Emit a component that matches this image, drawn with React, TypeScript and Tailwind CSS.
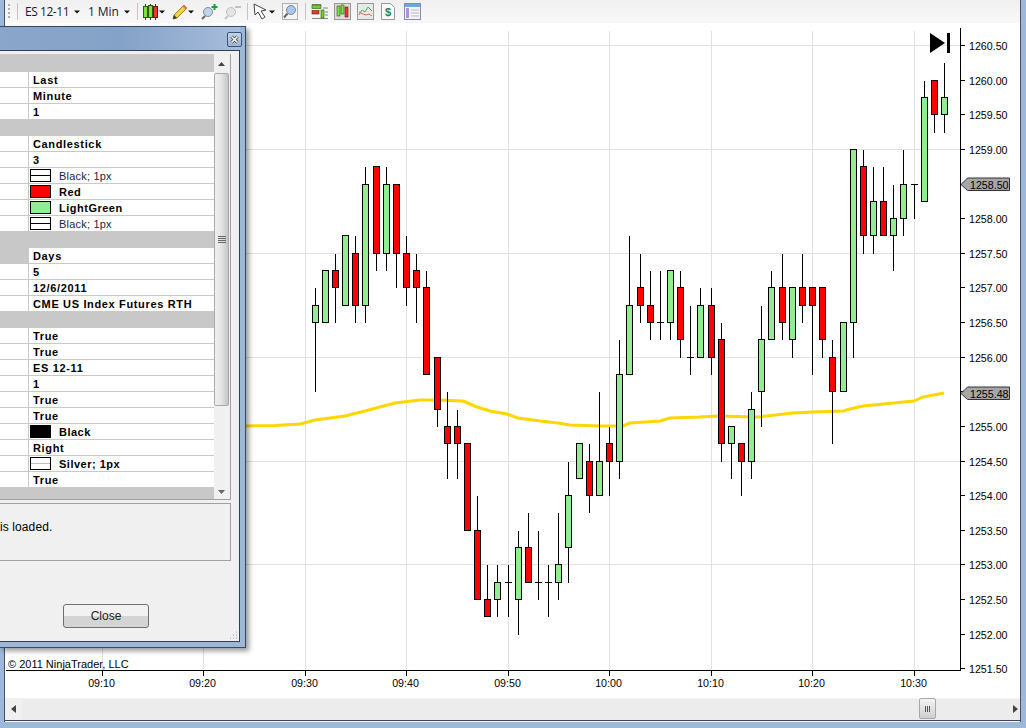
const G = "#90ee90";
const R = "#ff0000";

// [x pixel, body top, body bottom, high, low, up?]
const bars: [number, number, number, number, number, boolean][] = [
  [315, 1256.75, 1256.5, 1257, 1255.5, true],
  [325, 1257.25, 1256.5, 1257.25, 1256.5, true],
  [335, 1257.25, 1257, 1257.5, 1256.5, false],
  [345, 1257.75, 1256.75, 1257.75, 1256.75, true],
  [355, 1257.5, 1256.75, 1257.75, 1256.5, false],
  [365, 1258.5, 1256.75, 1258.75, 1256.5, true],
  [376, 1258.75, 1257.5, 1258.75, 1257.25, false],
  [386, 1258.5, 1257.5, 1258.75, 1257.25, true],
  [396, 1258.5, 1257.5, 1258.5, 1257, false],
  [406, 1257.5, 1257, 1257.75, 1256.75, false],
  [416, 1257.25, 1257, 1257.5, 1256.5, false],
  [426, 1257, 1255.75, 1257.25, 1255.75, false],
  [437, 1256, 1255.25, 1256, 1255, false],
  [447, 1255, 1254.75, 1255.5, 1254.25, false],
  [457, 1255, 1254.75, 1255.25, 1254.25, false],
  [467, 1254.75, 1253.5, 1254.75, 1253.5, false],
  [477, 1253.5, 1252.5, 1254, 1252.5, false],
  [487, 1252.5, 1252.25, 1253, 1252.25, false],
  [497, 1252.75, 1252.5, 1253, 1252.25, true],
  [508, 1252.75, 1252.75, 1253, 1252.25, true],
  [518, 1253.25, 1252.5, 1253.5, 1252, true],
  [528, 1253.25, 1252.75, 1253.75, 1252.75, false],
  [538, 1252.75, 1252.75, 1253.5, 1252.5, true],
  [548, 1252.75, 1252.75, 1253, 1252.25, true],
  [558, 1253, 1252.75, 1253.75, 1252.5, true],
  [568, 1254, 1253.25, 1254.5, 1252.75, true],
  [579, 1254.75, 1254.25, 1254.75, 1254.25, true],
  [589, 1254.5, 1254, 1254.75, 1253.75, false],
  [599, 1254.5, 1254, 1255.5, 1254, true],
  [609, 1254.75, 1254.5, 1255, 1254, false],
  [619, 1255.75, 1254.5, 1256.25, 1254.25, true],
  [629, 1256.75, 1255.75, 1257.75, 1255.75, true],
  [640, 1257, 1256.75, 1257.5, 1256.5, false],
  [650, 1256.75, 1256.5, 1257.25, 1256.25, false],
  [660, 1256.5, 1256.5, 1257.25, 1256.25, true],
  [670, 1257.25, 1256.5, 1257.25, 1256.25, true],
  [680, 1257, 1256.25, 1257.25, 1256, false],
  [690, 1256, 1256, 1256.75, 1255.75, true],
  [700, 1256.75, 1256, 1257, 1256, true],
  [711, 1256.75, 1256, 1257, 1255.75, false],
  [721, 1256.25, 1254.75, 1256.5, 1254.5, false],
  [731, 1255, 1254.75, 1255, 1254.25, true],
  [741, 1254.75, 1254.5, 1254.75, 1254, false],
  [751, 1255.25, 1254.5, 1255.5, 1254.25, true],
  [761, 1256.25, 1255.5, 1256.75, 1255, true],
  [771, 1257, 1256.25, 1257.25, 1256.25, true],
  [782, 1257, 1256.5, 1257.5, 1256.25, false],
  [792, 1257, 1256.25, 1257, 1256, true],
  [802, 1257, 1256.75, 1257.5, 1256.5, false],
  [812, 1257, 1256.75, 1257, 1255.75, false],
  [822, 1257, 1256.25, 1257, 1256, false],
  [832, 1256, 1255.5, 1256.25, 1254.75, false],
  [843, 1256.5, 1255.5, 1256.5, 1255.5, true],
  [853, 1259, 1256.5, 1259, 1256, true],
  [863, 1258.75, 1257.75, 1259, 1257.5, false],
  [873, 1258.25, 1257.75, 1258.75, 1257.5, true],
  [883, 1258.25, 1257.75, 1258.75, 1257.75, false],
  [893, 1258, 1257.75, 1258.5, 1257.25, true],
  [903, 1258.5, 1258, 1259, 1257.75, true],
  [914, 1258.5, 1258.5, 1258.5, 1258, true],
  [924, 1259.75, 1258.25, 1260, 1258.25, true],
  [934, 1260, 1259.5, 1260, 1259.25, false],
  [944, 1259.75, 1259.5, 1260.25, 1259.25, true],
];

const maLine =
  "246,426 275,425.5 300,424 315,420 345,416 365,411 395,403 420,400 437,400 463,401 477,407 490,411 507,414 518,418 540,421 558,423 570,425 600,426 623,426 630,423 660,421 670,418 700,417 717,416 757,417 793,413 813,412 843,411 850,409 863,406 914,401 923,397 944,393";

const gridX = [102, 203, 305, 406, 508, 609, 711, 812, 914];
const gridY = [45, 149, 253, 357, 461, 564];
const times = ["09:10", "09:20", "09:30", "09:40", "09:50", "10:00", "10:10", "10:20", "10:30"];
const prices = Array.from({ length: 19 }, (_, i) => 1260.5 - i * 0.5);

const py = (p: number) => Math.floor(45.5 + (1260.5 - p) * 69.25) + 0.5;

function Chart() {
  return (
    <svg
      viewBox="5 23 1015 675"
      width={1015}
      height={675}
      className="block"
      fontFamily="'Liberation Sans', Arial, sans-serif"
    >
      {gridX.map((x) => (
        <line key={x} x1={x + 0.5} x2={x + 0.5} y1={31} y2={670} stroke="#e0e0e0" shapeRendering="crispEdges" />
      ))}
      {gridY.map((y) => (
        <line key={y} x1={5} x2={960} y1={y + 0.5} y2={y + 0.5} stroke="#e0e0e0" shapeRendering="crispEdges" />
      ))}

      <polyline points={maLine} fill="none" stroke="#ffd700" strokeWidth={3} strokeLinejoin="round" />

      <g shapeRendering="crispEdges" stroke="#000">
        {bars.map(([x, top, bottom, high, low, up]) => (
          <g key={x}>
            <line x1={x + 0.5} x2={x + 0.5} y1={py(high)} y2={py(low)} />
            {top === bottom ? (
              <line x1={x - 3} x2={x + 4} y1={py(top)} y2={py(top)} />
            ) : (
              <rect x={x - 2.5} y={py(top)} width={6} height={py(bottom) - py(top)} fill={up ? G : R} />
            )}
          </g>
        ))}
      </g>

      {/* axes */}
      <g shapeRendering="crispEdges" stroke="#000">
        <line x1={960.5} x2={960.5} y1={28} y2={671} />
        <line x1={6} x2={961} y1={670.5} y2={670.5} />
        {gridX.map((x) => (
          <line key={x} x1={x + 0.5} x2={x + 0.5} y1={670} y2={676} />
        ))}
        {prices.map((p) => (
          <line key={p} x1={960} x2={965} y1={py(p)} y2={py(p)} />
        ))}
      </g>

      <g fontSize={10.67} fill="#000">
        {prices.map((p) =>
          p === 1258.5 ? null : (
            <text key={p} x={969} y={py(p) + 4}>
              {p.toFixed(2)}
            </text>
          ),
        )}
        {times.map((t, i) => (
          <text key={t} x={gridX[i] - 0.5} y={687} textAnchor="middle">
            {t}
          </text>
        ))}
        <text x={8} y={668} fontSize={11}>
          © 2011 NinjaTrader, LLC
        </text>
      </g>

      {/* price markers */}
      {[
        [184, "1258.50"],
        [393, "1255.48"],
      ].map(([y, label]) => {
        const c = y as number;
        return (
          <g key={c}>
            <polygon
              points={`961,${c + 0.5} 967.5,${c - 6} 1009.5,${c - 6} 1009.5,${c + 6.5} 967.5,${c + 6.5}`}
              fill="#a6a6a6"
              stroke="#333"
            />
            <text x={970} y={c + 4.5} fontSize={10.67} fill="#000">
              {label}
            </text>
          </g>
        );
      })}

      {/* jump to last bar */}
      <polygon points="930,33 945,43 930,53" fill="#000" />
      <rect x={947} y={33} width={3} height={20} fill="#000" />
    </svg>
  );
}

function Caret() {
  return (
    <svg width={6} height={4} viewBox="0 0 6 4" className="shrink-0">
      <polygon points="0,0.5 6,0.5 3,3.5" fill="#111" />
    </svg>
  );
}

function Sep({ ml }: { ml: string }) {
  return <div className={`${ml} h-[17px] w-px shrink-0 bg-[#c4c4c4]`} />;
}

function Toolbar() {
  return (
    <div className="flex h-[23px] shrink-0 items-center bg-gradient-to-b from-[#f0f0f0] to-[#f8f8f8] font-['Open_Sans','Liberation_Sans',sans-serif] text-[12px] text-[#1a1a2e]">
      <div className="ml-[3px] h-[15px] w-[2px] shrink-0 bg-[repeating-linear-gradient(to_bottom,#b0b0b0_0,#b0b0b0_2px,transparent_2px,transparent_4px)]" />
      <Sep ml="ml-[7px]" />
      <span className="ml-[7px] w-[44px] shrink-0 whitespace-nowrap tracking-[-0.45px]">ES 12-11</span>
      <div className="ml-[5px]">
        <Caret />
      </div>
      <span className="ml-[8px] w-[32px] shrink-0 whitespace-nowrap tracking-[-0.1px]">1 Min</span>
      <div className="ml-[4px]">
        <Caret />
      </div>
      <Sep ml="ml-[7px]" />

      <svg width={15} height={16} viewBox="0 0 15 16" className="ml-[5px] shrink-0">
        <rect x="0.5" y="2.5" width="4" height="11" fill="#7ee03a" stroke="#2c5a12" />
        <rect x="5.5" y="1.5" width="4" height="12" fill="#7ee03a" stroke="#2c5a12" />
        <rect x="10.5" y="2.5" width="4" height="11" fill="#ee3a2a" stroke="#6a1a10" />
        <path d="M2.5 0v2M7.5 0v2M12.5 0v2M2.5 14v2M7.5 14v2M12.5 14v2" stroke="#333" />
      </svg>
      <div className="ml-[1px]">
        <Caret />
      </div>

      <svg width={16} height={16} viewBox="0 0 16 16" className="ml-[7px] shrink-0">
        <path d="M12 1l3 3L5 14l-4 1 1-4z" fill="#f6d33c" stroke="#8a6a10" strokeWidth="0.8" />
        <path d="M12 1l3 3-1.5 1.5-3-3z" fill="#e07a5a" />
        <path d="M1 15l1-4 3 3z" fill="#333" />
      </svg>
      <Caret />

      <svg width={17} height={17} viewBox="0 0 17 17" className="ml-[7px] shrink-0">
        <circle cx="7" cy="9" r="4.5" fill="#bcd6ee" stroke="#8a8a8a" />
        <path d="M4 13l-3 3" stroke="#666" strokeWidth="2" />
        <path d="M13.5 1v6M10.5 4h6" stroke="#18a040" strokeWidth="2" />
      </svg>
      <svg width={18} height={17} viewBox="0 0 18 17" className="ml-[6px] shrink-0">
        <circle cx="7" cy="9" r="4.5" fill="#e4e4e4" stroke="#c0c0c0" />
        <path d="M4 13l-3 3" stroke="#c4c4c4" strokeWidth="2" />
        <path d="M11 4h6" stroke="#c0c0c0" strokeWidth="2" />
      </svg>
      <Sep ml="ml-[5px]" />

      <svg width={15} height={17} viewBox="0 0 15 17" className="ml-[5px] shrink-0">
        <path d="M1 1l1 11 3-3 4 7 3-2-4-6 5-1z" fill="#fff" stroke="#444" />
      </svg>
      <div className="ml-[1px]">
        <Caret />
      </div>
      <svg width={16} height={17} viewBox="0 0 16 17" className="ml-[7px] shrink-0">
        <rect x="0.5" y="0.5" width="15" height="16" fill="#f4f4f4" stroke="#b0b0b0" />
        <circle cx="9" cy="7" r="4.5" fill="#a8c8ee" stroke="#7a8a9a" />
        <path d="M5.5 10.5l-3.5 4" stroke="#666" strokeWidth="2" />
      </svg>
      <Sep ml="ml-[7px]" />

      <svg width={17} height={17} viewBox="0 0 17 17" className="ml-[5px] shrink-0">
        <path d="M1 1.5h9M1 15.5h16M14 9h3M14 12h3M12 5h5" stroke="#888" />
        <rect x="1" y="2" width="9" height="3.5" fill="#6fd02c" stroke="#2c5a12" strokeWidth="0.6" />
        <rect x="1" y="7.5" width="7" height="3.5" fill="#e83a2a" stroke="#6a1a10" strokeWidth="0.6" />
        <rect x="10" y="7" width="3" height="8" fill="#6fd02c" stroke="#2c5a12" strokeWidth="0.6" />
      </svg>
      <svg width={17} height={17} viewBox="0 0 17 17" className="ml-[6px] shrink-0">
        <rect x="0.5" y="0.5" width="16" height="16" fill="#ddd" stroke="#999" />
        <rect x="3" y="3" width="3" height="10" fill="#7ee03a" stroke="#2c5a12" strokeWidth="0.6" />
        <rect x="7" y="2" width="3" height="9" fill="#7ee03a" stroke="#2c5a12" strokeWidth="0.6" />
        <rect x="11" y="4" width="3" height="10" fill="#ee3a2a" stroke="#6a1a10" strokeWidth="0.6" />
      </svg>
      <svg width={17} height={17} viewBox="0 0 17 17" className="ml-[6px] shrink-0">
        <rect x="0.5" y="0.5" width="16" height="16" fill="#e8e8e8" stroke="#999" />
        <path d="M2 12l3-5 3 2 3-5 4 4" fill="none" stroke="#4cab5a" />
        <path d="M2 9l4 2 3 1 3-1 3 2" fill="none" stroke="#d86a5a" />
      </svg>
      <svg width={14} height={17} viewBox="0 0 14 17" className="ml-[7px] shrink-0">
        <path d="M0.5 0.5h9l4 4v12h-13z" fill="#fafafa" stroke="#9a9a9a" />
        <text x="7" y="13" textAnchor="middle" fontSize="11" fontWeight="700" fill="#1f8a3a" fontFamily="'Liberation Sans', sans-serif">
          $
        </text>
      </svg>
      <svg width={17} height={17} viewBox="0 0 17 17" className="ml-[9px] shrink-0">
        <rect x="0.5" y="0.5" width="16" height="16" fill="#f4f4f8" stroke="#8a8aa8" />
        <rect x="1" y="1" width="15" height="3" fill="#6aa8e0" />
        <rect x="2" y="5" width="3" height="10" fill="#b090e0" />
        <path d="M7 7h8M7 10h8M7 13h8" stroke="#b8b8c8" />
      </svg>
    </div>
  );
}

type Row =
  | { kind: "section"; h?: string }
  | { kind: "text"; text: string; gray?: boolean }
  | { kind: "swatch"; text: string; fill: string; mid?: string; thin?: boolean };

const rows: Row[] = [
  { kind: "section", h: "h-[18px]" },
  { kind: "text", text: "Last" },
  { kind: "text", text: "Minute" },
  { kind: "text", text: "1" },
  { kind: "section" },
  { kind: "text", text: "Candlestick" },
  { kind: "text", text: "3" },
  { kind: "swatch", text: "Black; 1px", fill: "#fff", mid: "#000", thin: true },
  { kind: "swatch", text: "Red", fill: "#ff0000" },
  { kind: "swatch", text: "LightGreen", fill: "#90ee90" },
  { kind: "swatch", text: "Black; 1px", fill: "#fff", mid: "#000", thin: true },
  { kind: "section" },
  { kind: "text", text: "Days", gray: true },
  { kind: "text", text: "5" },
  { kind: "text", text: "12/6/2011" },
  { kind: "text", text: "CME US Index Futures RTH" },
  { kind: "section" },
  { kind: "text", text: "True" },
  { kind: "text", text: "True" },
  { kind: "text", text: "ES 12-11" },
  { kind: "text", text: "1" },
  { kind: "text", text: "True" },
  { kind: "text", text: "True" },
  { kind: "swatch", text: "Black", fill: "#000" },
  { kind: "text", text: "Right" },
  { kind: "swatch", text: "Silver; 1px", fill: "#fff", mid: "#c0c0c0" },
  { kind: "text", text: "True" },
];

function GridRow({ row }: { row: Row }) {
  if (row.kind === "section") return <div className={`${row.h ?? "h-4"} bg-[#c8c8c8]`} />;
  return (
    <div className="flex h-4 border-b border-[#c8c8c8] bg-white">
      <div className={`w-[29px] shrink-0 border-r border-[#c8c8c8] ${row.kind === "text" && row.gray ? "bg-[#c8c8c8]" : ""}`} />
      {row.kind === "text" ? (
        <span className="ml-[4px] text-[11px] leading-[17px] font-bold tracking-[0.65px] whitespace-nowrap">{row.text}</span>
      ) : (
        <>
          <span
            className="relative ml-[1px] mt-px h-[13px] w-[21px] shrink-0 border border-black"
            style={{ background: row.fill }}
          >
            {row.mid && <span className="absolute top-[5px] right-0 left-0 h-px" style={{ background: row.mid }} />}
          </span>
          <span
            className={`ml-[8px] text-[11px] leading-[17px] whitespace-nowrap ${row.thin ? "tracking-[0.2px] text-[#241a4a]" : "font-bold tracking-[0.5px]"}`}
          >
            {row.text}
          </span>
        </>
      )}
    </div>
  );
}

function Dialog() {
  return (
    <div className="absolute top-[3px] left-[-5px] flex h-[622px] w-[246px] flex-col border-t border-r border-b border-[#2f4a6a] bg-[#9fb7d7] pr-[5px] pb-[5px] shadow-[3px_3px_5px_rgba(0,0,0,0.4)] font-['Liberation_Sans',Arial,sans-serif] text-black">
      {/* title bar */}
      <div className="flex h-[23px] shrink-0 items-start justify-end bg-gradient-to-r from-[#8ba6ca] via-[#84a2c7] to-[#a8bddb]">
        <div className="mt-[5px] -mr-[2px] flex h-[15px] w-[15px] items-center justify-center rounded-[2px] border border-[#3a5474] bg-gradient-to-b from-[#c4d4e8] to-[#9db4d2]">
          <svg width={9} height={9} viewBox="0 0 9 9">
            <path d="M1.5 1.5l6 6M7.5 1.5l-6 6" stroke="#333" strokeWidth="3" />
            <path d="M1.5 1.5l6 6M7.5 1.5l-6 6" stroke="#fff" strokeWidth="1.6" />
          </svg>
        </div>
      </div>

      {/* client area */}
      <div className="relative flex min-h-0 flex-1 flex-col border-t border-r border-b border-[#2f3f55] bg-[#f0f0f0] pr-[8px]">
        <div className="mt-[3px] flex h-[446px] shrink-0 border-r border-b border-[#a0a0a0]">
          <div className="min-w-0 flex-1 bg-[#c8c8c8]">
            {rows.map((r, i) => (
              <GridRow key={i} row={r} />
            ))}
          </div>
          {/* scrollbar */}
          <div className="relative w-4 shrink-0 bg-[#f0f0f0]">
            <svg width={7} height={4} viewBox="0 0 7 4" className="absolute top-[8px] left-[4px]">
              <polygon points="0,4 7,4 3.5,0" fill="#444" />
            </svg>
            <div className="absolute top-[19px] left-0 flex h-[333px] w-[15px] items-center justify-center rounded-[2px] border border-[#a8a8a8] bg-gradient-to-r from-[#f0f0f0] via-[#e4e4e4] to-[#c4c4c4]">
              <div className="flex h-[7px] w-[8px] flex-col justify-between">
                <div className="h-px bg-[#666]" />
                <div className="h-px bg-[#666]" />
                <div className="h-px bg-[#666]" />
                <div className="h-px bg-[#666]" />
              </div>
            </div>
            <svg width={7} height={4} viewBox="0 0 7 4" className="absolute bottom-[5px] left-[4px]">
              <polygon points="0,0 7,0 3.5,4" fill="#666" />
            </svg>
          </div>
        </div>

        <div className="mt-[3px] h-[58px] shrink-0 border-t border-r border-b border-[#a0a0a0] bg-[#f0f0f0] pt-[16px] text-[12px] leading-[15px] tracking-[0.1px]">
          is loaded.
        </div>

        <button className="mt-[43px] ml-[63px] h-[24px] w-[86px] shrink-0 rounded-[3px] border border-[#707070] bg-gradient-to-b from-[#f2f2f2] from-50% to-[#d4d4d4] to-50% text-[12px] text-[#222]">
          Close
        </button>

        <svg width={9} height={9} viewBox="0 0 9 9" className="absolute right-[1px] bottom-[1px]">
          <path d="M7 1h1M4 4h1M7 4h1M1 7h1M4 7h1M7 7h1" stroke="#a0a0a0" />
        </svg>
      </div>
    </div>
  );
}

function HScroll() {
  return (
    <div className="flex h-[23px] shrink-0 items-center border-b border-[#3a4656] bg-[#ececec] shadow-[inset_0_1px_0_#f4f4f4]">
      <div className="flex h-full w-[17px] shrink-0 items-center justify-center bg-[#f0f0f0]">
        <svg width={5} height={8} viewBox="0 0 5 8">
          <polygon points="5,0 5,8 0,4" fill="#444" />
        </svg>
      </div>
      <div className="ml-[897px] flex h-[21px] w-[17px] shrink-0 items-center justify-center gap-px self-start rounded-[2px] border border-[#a8a8a8] bg-gradient-to-b from-[#f4f4f4] to-[#cfcfcf]">
        <div className="h-[6px] w-px bg-[#555]" />
        <div className="h-[6px] w-px bg-[#555]" />
        <div className="h-[6px] w-px bg-[#555]" />
      </div>
      <svg width={5} height={8} viewBox="0 0 5 8" className="ml-[77px]">
        <polygon points="0,0 0,8 5,4" fill="#444" />
      </svg>
    </div>
  );
}

export default function App() {
  return (
    <div className="h-[728px] w-[1026px] overflow-hidden bg-[#9db8da] pr-[5px] pb-[6px] pl-[4px]">
      <div className="relative flex h-full flex-col border-r border-l border-[#44546a] bg-white">
        <Toolbar />
        <div className="relative h-[675px] shrink-0">
          <Chart />
          <Dialog />
        </div>
        <HScroll />
      </div>
    </div>
  );
}
